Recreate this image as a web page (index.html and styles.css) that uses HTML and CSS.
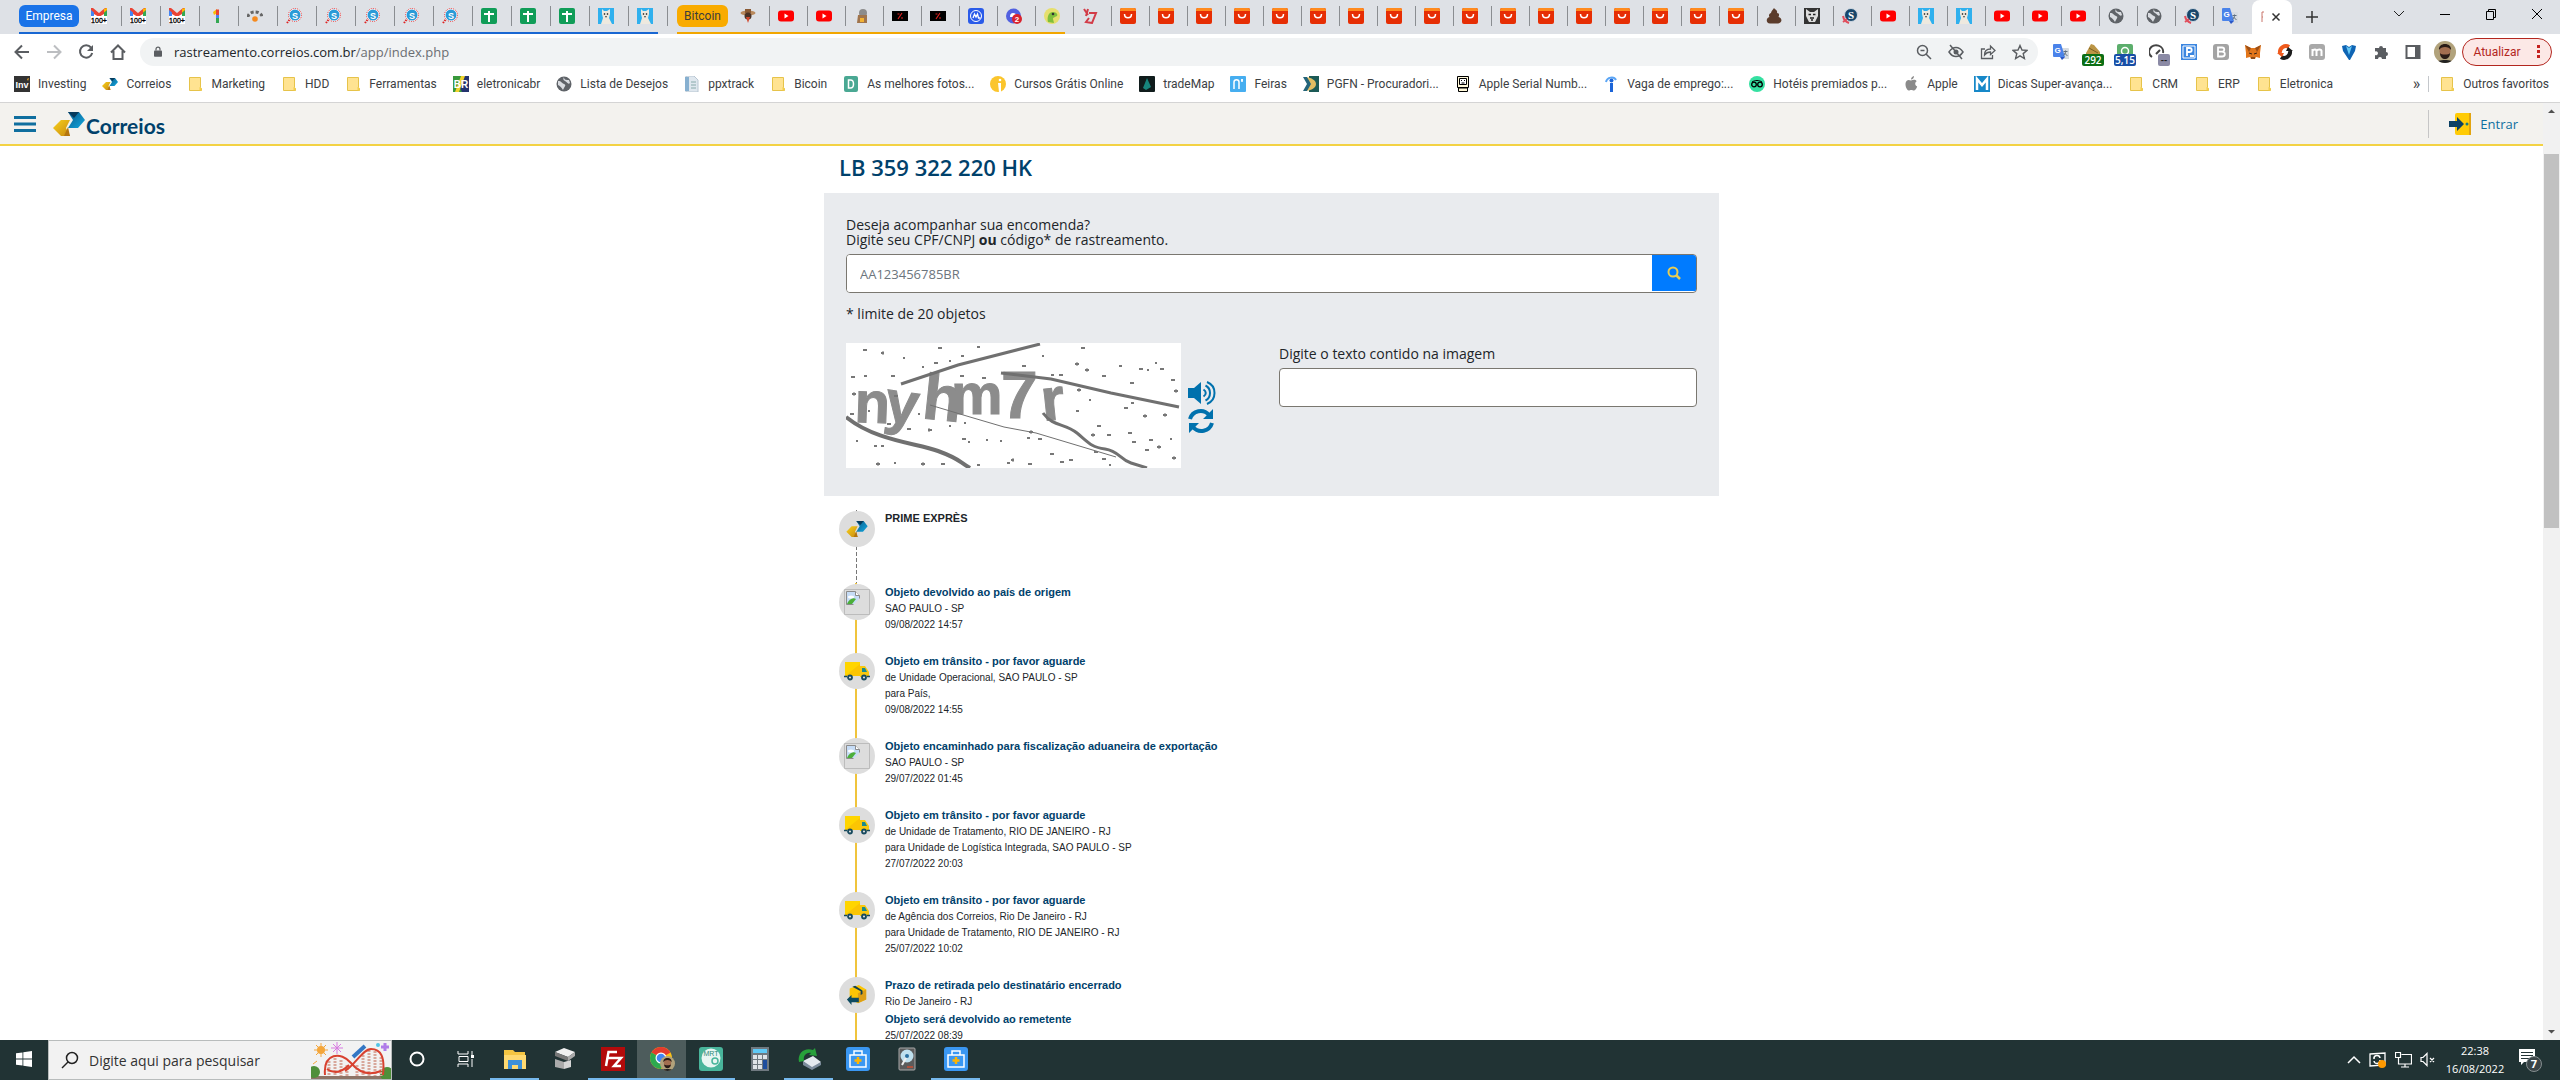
FILE: index.html
```html
<!DOCTYPE html>
<html lang="pt-BR">
<head>
<meta charset="utf-8">
<title>Rastreamento - Correios</title>
<link rel="stylesheet" href="styles.css">
</head>
<body>
<svg class="sprite" aria-hidden="true">
  <defs>
    <linearGradient id="g-gold" x1="0" y1="0" x2="1" y2="1"><stop offset="0" stop-color="#f8d21c"/><stop offset="1" stop-color="#c98a10"/></linearGradient>
    <linearGradient id="g-blue" x1="0" y1="0" x2="1" y2="1"><stop offset="0" stop-color="#0b5c8c"/><stop offset="1" stop-color="#12a8df"/></linearGradient>
    <clipPath id="round"><circle cx="11" cy="11" r="11"/></clipPath>
  </defs>
  <symbol id="gmail" viewBox="0 0 16 16"><path d="M0 0h2l6 5 6-5h2v8H0z" fill="#ea4335"/><path d="M0 2l3 2.500V8H0z" fill="#4285f4"/><path d="M13 4.500L16 2v6h-3z" fill="#34a853"/><path d="M13 1l3-1v2l-3 2.500z" fill="#fbbc04"/><path d="M3 6l5 3 5-3v3H3z" fill="#fff"/><rect y="8" width="16" height="8" fill="#fff"/><text x="8" y="15" font-family="Liberation Sans" font-size="7" text-anchor="middle" fill="#000" stroke="#000" stroke-width=".3">100+</text></symbol>
  <symbol id="one" viewBox="0 0 16 16"><path d="M5 4l4-3v4L6 7z" fill="#fbbc04"/><path d="M8 1.500h3V7H8z" fill="#ea4335"/><path d="M8 7h3v4H8z" fill="#4285f4"/><path d="M8 10h3v5H8z" fill="#34a853"/></symbol>
  <symbol id="fan" viewBox="0 0 16 16"><path d="M1 9a7 5 0 0 1 14 0" fill="none" stroke="#666" stroke-width="3" stroke-dasharray="3 2"/><circle cx="8" cy="11" r="2.800" fill="#f58a1f"/></symbol>
  <symbol id="sblue" viewBox="0 0 16 16"><circle cx="9" cy="7" r="6.500" fill="#fff" stroke="#e33" stroke-dasharray="1 1"/><path d="M1 15l3-4" stroke="#d22" stroke-width="2" stroke-dasharray="1.500 1"/><circle cx="9" cy="7" r="5.500" fill="#2b9bd7"/><text x="9" y="10.500" font-family="Liberation Sans" font-weight="bold" font-size="9" text-anchor="middle" fill="#fff">S</text></symbol>
  <symbol id="sheet" viewBox="0 0 16 16"><rect width="16" height="16" rx="2" fill="#109d58"/><path d="M3 6h10M8 3v11" stroke="#fff" stroke-width="2"/></symbol>
  <symbol id="llama" viewBox="0 0 16 16"><rect width="16" height="16" fill="#2fb0ee"/><path d="M3 16l2-6-1-4 0-5 2 2h3l3-2 0 5-1 4 3 6z" fill="#eee9df"/><circle cx="6.500" cy="6" r=".8"/><circle cx="9.500" cy="6" r=".8"/><path d="M7 8h2l-1 2z" fill="#444"/></symbol>
  <symbol id="cowboy" viewBox="0 0 16 16"><ellipse cx="8" cy="5" rx="7.500" ry="2.500" fill="#b98a5e"/><path d="M5 1h6v4H5z" fill="#8a5a34"/><circle cx="8" cy="8" r="3.500" fill="#4a3226"/><path d="M6 9h4l-2 6z" fill="#d4472c"/></symbol>
  <symbol id="yt" viewBox="0 0 16 16"><rect y="2.500" width="16" height="11" rx="3" fill="#f00"/><path d="M6.500 5.500v5l4-2.500z" fill="#fff"/></symbol>
  <symbol id="mouse" viewBox="0 0 16 16"><circle cx="9" cy="5" r="4" fill="#8c8c8c"/><path d="M4 7h9v8H3z" fill="#a0744c"/><path d="M6 10h4v4H6z" fill="#f2b233"/></symbol>
  <symbol id="pct" viewBox="0 0 16 16"><rect y="3" width="16" height="10"/><path d="M10 5l-4 6M5.500 6h2M9 10h2" stroke="#d22" stroke-width="1.200"/></symbol>
  <symbol id="cmc" viewBox="0 0 16 16"><rect width="16" height="16" rx="3" fill="#2a5be9"/><circle cx="8" cy="8" r="5.500" fill="none" stroke="#fff"/><path d="M5 10l1.500-4L8 9l1.500-3 1 4h2" fill="none" stroke="#fff" stroke-width="1.300"/></symbol>
  <symbol id="discord" viewBox="0 0 16 16"><circle cx="7.500" cy="8" r="7.500" fill="#5160e0"/><path d="M4 9c0-3 1-4 3-4s4 1 4 4z" fill="#fff"/><circle cx="11" cy="11" r="5" fill="#d9232e"/><text x="11" y="14" font-family="Liberation Sans" font-weight="bold" font-size="8" text-anchor="middle" fill="#fff">2</text></symbol>
  <symbol id="gecko" viewBox="0 0 16 16"><circle cx="8" cy="8" r="8" fill="#e6df6e"/><path d="M4 14c-1-4 0-10 5-10 4 0 5 3 4 4s-4 1-4 3l1 4z" fill="#7fbf3c"/><circle cx="9" cy="6" r="1.300" fill="#333"/></symbol>
  <symbol id="redy" viewBox="0 0 16 16"><path d="M2 1l4 6M6 1L4 8M7 5h7l-4 10-6-1 3-4" fill="none" stroke="#d23c48" stroke-width="2"/></symbol>
  <symbol id="ali" viewBox="0 0 16 16"><rect width="16" height="16" rx="2" fill="#e62e04"/><path d="M0 3V2a2 2 0 0 1 2-2h12a2 2 0 0 1 2 2v1z" fill="#ff8a1e"/><path d="M4.500 6c0 5 7 5 7 0" fill="none" stroke="#fff" stroke-width="1.500"/></symbol>
  <symbol id="poop" viewBox="0 0 16 16"><path d="M8 0c1 2 4 2 3 5 3 0 2 3 1.500 4 4 1 4 6-.5 6.500H4C-.5 15 0 10 3.500 9 2 7 4 5 5 5c0-2 2-3 3-5z" fill="#5b3c2c"/></symbol>
  <symbol id="dog" viewBox="0 0 16 16"><rect width="16" height="16" fill="#333"/><path d="M2 1l4 3h4l4-3v7l-3 6H5L2 8z" fill="#ddd"/><path d="M4.500 6.500h2.500M9 6.500h2.500M6 10h4M7 12h2" stroke="#222" stroke-width="1.300"/></symbol>
  <symbol id="snavy" viewBox="0 0 16 16"><circle cx="9" cy="7" r="6.500" fill="#17466b" stroke="#cfd8e2"/><path d="M1 8a9 9 0 0 0 6 7M1 14l4-3" stroke="#e04e5c" stroke-width="2" fill="none"/><text x="9" y="11" font-family="Liberation Serif" font-weight="bold" font-size="11" text-anchor="middle" fill="#fff">S</text></symbol>
  <symbol id="globe" viewBox="0 0 16 16"><circle cx="8" cy="8" r="7.500" fill="#5f6368"/><path d="M2 5c4 0 3 2 6 3s0 3-1 6c-2-3-3-4-5-5zM8 1c0 3 2 3 5 3l1 3c-2 2-3-1-5-2S7 3 8 1z" fill="#d9dce1"/></symbol>
  <symbol id="gtrans" viewBox="0 0 16 16"><path d="M7 4h8a1 1 0 0 1 1 1v10H9z" fill="#d6dbe1"/><path d="M1 0h7l4 13H1a1 1 0 0 1-1-1V1a1 1 0 0 1 1-1z" fill="#4a83ea"/><path d="M7 13h5l-3 3z" fill="#2a56c6"/><path d="M10.500 7.500h4M12.500 6.500v1c0 2-1 3-2 4M11.500 9l3 3" stroke="#5f6f80" fill="none"/><text x="4.500" y="9" font-family="Liberation Sans" font-weight="bold" font-size="8" text-anchor="middle" fill="#fff">G</text></symbol>
  <symbol id="folder" viewBox="0 0 16 16"><path d="M2.500 1.500h11v10l1 1v2h-12z" fill="#ffe391" stroke="#e6c34a"/><path d="M12.500 11v3.500h2V12z" fill="#f4cf4e"/></symbol>
  <symbol id="inv" viewBox="0 0 16 16"><rect width="16" height="16" fill="#333"/><text x="8" y="12" font-family="Liberation Sans" font-weight="bold" font-size="9" text-anchor="middle" fill="#fff">Inv</text><path d="M13 3l2-1-1 3z" fill="#f5a623"/></symbol>
  <symbol id="correios" viewBox="0 0 32 24"><path d="M8 8h9l-4 8 4 8H8L0 16z" fill="url(#g-gold)"/><path d="M17 24h-6l4-9z" fill="#b5760f"/><path d="M15 0h11l6 8-7 8H15l5-8z" fill="url(#g-blue)"/><path d="M15 0h11l-5 6z" fill="#073b5c"/></symbol>
  <symbol id="br" viewBox="0 0 16 16"><rect width="16" height="16" fill="#24336f"/><path d="M0 0h10L5 8l4 8H0z" fill="#38993c"/><path d="M8 0h4L6 16H2z" fill="#efd32d"/><text x="8" y="12" font-family="Liberation Sans" font-weight="bold" font-size="10" text-anchor="middle" fill="#fff">BR</text></symbol>
  <symbol id="doc" viewBox="0 0 16 16"><path d="M2 0h8l4 4v12H2z" fill="#dfe7ee" stroke="#b8c6d2"/><path d="M1 1h4v14H1z" fill="#87b0d0"/><path d="M7 6h5M7 9h5M7 12h5" stroke="#8aa"/></symbol>
  <symbol id="dgreen" viewBox="0 0 16 16"><rect x="1" width="14" height="16" rx="2" fill="#4aa893"/><path d="M5.500 4h2c4 0 4 8 0 8h-2z" fill="none" stroke="#fff" stroke-width="1.500"/></symbol>
  <symbol id="bulb" viewBox="0 0 16 16"><circle cx="8" cy="8" r="8" fill="#fbc52c"/><path d="M8 7h3v9H9z" fill="#fff"/><circle cx="10" cy="4" r="1.300" fill="#fff"/></symbol>
  <symbol id="tmap" viewBox="0 0 16 16"><rect width="16" height="16" rx="1" fill="#101c1c"/><path d="M8 2l4 9-5 3-3-2z" fill="#17857c"/></symbol>
  <symbol id="nf" viewBox="0 0 16 16"><rect width="16" height="16" rx="1" fill="#46aef0"/><path d="M4 13V6c0-3 5-3 5 0v7M11 4h2M12 3v3" fill="none" stroke="#fff" stroke-width="1.500"/></symbol>
  <symbol id="pgfn" viewBox="0 0 16 16"><rect x="6" width="10" height="16" fill="#1c5a56"/><path d="M0 1h4l6 7-6 7H0l4-7z" fill="#23647a"/><path d="M4 1c4 1 9 3 9 7s-5 6-9 7l4-7z" fill="#e2bd62"/></symbol>
  <symbol id="mac" viewBox="0 0 16 16"><path d="M2.500 .5h11v11h-11zM3.500 12h9v3.500h-9z" fill="#fff8d8" stroke="#000"/><path d="M4.500 2.500h7v6h-7z" fill="#fff" stroke="#000"/><path d="M6 4.500h1M9 4.500h1M6.500 7h3" stroke="#000"/></symbol>
  <symbol id="vaga" viewBox="0 0 16 16"><path d="M3 6c1-5 8-6 10-2" fill="none" stroke="#5aa5f5" stroke-width="2"/><circle cx="8.500" cy="4.500" r="2" fill="#1b64d8"/><path d="M7 7h3v9H7z" fill="#1b64d8"/></symbol>
  <symbol id="trip" viewBox="0 0 16 16"><circle cx="8" cy="8" r="8" fill="#34e0a1"/><circle cx="5" cy="8.500" r="2.300" fill="none" stroke="#000" stroke-width="1.300"/><circle cx="11" cy="8.500" r="2.300" fill="none" stroke="#000" stroke-width="1.300"/><path d="M3 6c3-2 7-2 10 0" stroke="#000" fill="none"/></symbol>
  <symbol id="apple" viewBox="0 0 16 16"><path d="M11 3.800c1 0 2 .5 2.700 1.400-2.200 1.300-1.800 4.400.5 5.300-.7 2-2 4-3.400 4-1 0-1.300-.6-2.500-.6s-1.600.6-2.500.6C3.700 14.500 1 8 3.500 5c1.600-1.800 3-1 4.500-.5 1-.3 2-.7 3-.7zM8 3.500C8 1.800 9.300.3 11 0c.2 1.800-1.300 3.500-3 3.500z" fill="#8a8a8a"/></symbol>
  <symbol id="mblue" viewBox="0 0 16 16"><rect width="16" height="16" fill="#1788c8"/><path d="M3 14V3l5 6 5-6v11" fill="none" stroke="#fff" stroke-width="2.500"/></symbol>
  <symbol id="truck" viewBox="0 0 26 20"><path d="M1 1h15v14H1z" fill="#ffd500"/><path d="M1 15L16 3v12z" fill="#fbc503"/><path d="M16 5h5l4 6v5h-9z" fill="#f9c80e"/><path d="M18 7h3l2 4h-5z" fill="#1b8a8c"/><path d="M0 15.500h3M23 15.500h3" stroke="#174a5e" stroke-width="1.500"/><circle cx="6" cy="16.500" r="2" fill="#ddd" stroke="#174a5e" stroke-width="1.800"/><circle cx="20" cy="16.500" r="2" fill="#ddd" stroke="#174a5e" stroke-width="1.800"/></symbol>
  <symbol id="broken" viewBox="0 0 26 26"><path d="M.5.500h25v25H.5z" fill="none" stroke="#bcbcbc"/><path d="M2.500 2.500h9l4 4v9h-13z" fill="#c6dcf6" stroke="#8b8b8b"/><path d="M11.500 2.500v4h4" fill="#fff" stroke="#8b8b8b"/><ellipse cx="7" cy="8" rx="3" ry="1.500" fill="#fff"/><path d="M3 15c2-5 6-7 9-5l-4 5z" fill="#4caf3a"/><path d="M9 16l7-7v7z" fill="#ddd"/></symbol>
  <symbol id="box" viewBox="0 0 24 24"><path d="M4 5l10-4 8 5v11l-9 4-9-5z" fill="#fcc505"/><path d="M13 10l9-4v11l-9 4z" fill="#dd9f17"/><path d="M7 3l9 5v4l2-1V7L10 2z" fill="#12404f"/><path d="M1 17l5-5v3h8v5H6v3z" fill="#0c4a60"/></symbol>
  <symbol id="kit" viewBox="0 0 24 24"><rect width="24" height="24" rx="3" fill="#3a97f2"/><path d="M4 8h16v12H4zM8 8V4h8v4" fill="none" stroke="#fff" stroke-width="1.500"/><path d="M12 10v7M8.500 13.500h7" stroke="#ffb400" stroke-width="2.500"/></symbol>
  <symbol id="face" viewBox="0 0 22 22"><g clip-path="url(#round)"><rect width="22" height="22" fill="#b1a27b"/><path d="M2 22c0-4 18-4 18 0z" fill="#222"/><ellipse cx="11" cy="10" rx="5.500" ry="7" fill="#a26e50"/><path d="M5 9C4 1 18 1 17 9c-2-4-10-4-12 0zM6 12c1 2 9 2 10 0 0 8-10 8-10 0z" fill="#2a1c17"/></g></symbol>
</svg>

<div class="window">
  <nav class="tabs" aria-label="Guias">
    <div class="group group-blue">
      <button class="chip">Empresa</button>
      <button class="tab"><svg class="fav"><use href="#gmail"/></svg></button>
      <button class="tab"><svg class="fav"><use href="#gmail"/></svg></button>
      <button class="tab"><svg class="fav"><use href="#gmail"/></svg></button>
      <button class="tab"><svg class="fav"><use href="#one"/></svg></button>
      <button class="tab"><svg class="fav"><use href="#fan"/></svg></button>
      <button class="tab"><svg class="fav"><use href="#sblue"/></svg></button>
      <button class="tab"><svg class="fav"><use href="#sblue"/></svg></button>
      <button class="tab"><svg class="fav"><use href="#sblue"/></svg></button>
      <button class="tab"><svg class="fav"><use href="#sblue"/></svg></button>
      <button class="tab"><svg class="fav"><use href="#sblue"/></svg></button>
      <button class="tab"><svg class="fav"><use href="#sheet"/></svg></button>
      <button class="tab"><svg class="fav"><use href="#sheet"/></svg></button>
      <button class="tab"><svg class="fav"><use href="#sheet"/></svg></button>
      <button class="tab"><svg class="fav"><use href="#llama"/></svg></button>
      <button class="tab"><svg class="fav"><use href="#llama"/></svg></button>
    </div>
    <div class="group group-gold">
      <button class="chip">Bitcoin</button>
      <button class="tab"><svg class="fav"><use href="#cowboy"/></svg></button>
      <button class="tab"><svg class="fav"><use href="#yt"/></svg></button>
      <button class="tab"><svg class="fav"><use href="#yt"/></svg></button>
      <button class="tab"><svg class="fav"><use href="#mouse"/></svg></button>
      <button class="tab"><svg class="fav"><use href="#pct"/></svg></button>
      <button class="tab"><svg class="fav"><use href="#pct"/></svg></button>
      <button class="tab"><svg class="fav"><use href="#cmc"/></svg></button>
      <button class="tab"><svg class="fav"><use href="#discord"/></svg></button>
      <button class="tab"><svg class="fav"><use href="#gecko"/></svg></button>
    </div>
    <div class="group">
      <button class="tab"><svg class="fav"><use href="#redy"/></svg></button>
      <button class="tab"><svg class="fav"><use href="#ali"/></svg></button>
      <button class="tab"><svg class="fav"><use href="#ali"/></svg></button>
      <button class="tab"><svg class="fav"><use href="#ali"/></svg></button>
      <button class="tab"><svg class="fav"><use href="#ali"/></svg></button>
      <button class="tab"><svg class="fav"><use href="#ali"/></svg></button>
      <button class="tab"><svg class="fav"><use href="#ali"/></svg></button>
      <button class="tab"><svg class="fav"><use href="#ali"/></svg></button>
      <button class="tab"><svg class="fav"><use href="#ali"/></svg></button>
      <button class="tab"><svg class="fav"><use href="#ali"/></svg></button>
      <button class="tab"><svg class="fav"><use href="#ali"/></svg></button>
      <button class="tab"><svg class="fav"><use href="#ali"/></svg></button>
      <button class="tab"><svg class="fav"><use href="#ali"/></svg></button>
      <button class="tab"><svg class="fav"><use href="#ali"/></svg></button>
      <button class="tab"><svg class="fav"><use href="#ali"/></svg></button>
      <button class="tab"><svg class="fav"><use href="#ali"/></svg></button>
      <button class="tab"><svg class="fav"><use href="#ali"/></svg></button>
      <button class="tab"><svg class="fav"><use href="#ali"/></svg></button>
      <button class="tab"><svg class="fav"><use href="#poop"/></svg></button>
      <button class="tab"><svg class="fav"><use href="#dog"/></svg></button>
      <button class="tab"><svg class="fav"><use href="#snavy"/></svg></button>
      <button class="tab"><svg class="fav"><use href="#yt"/></svg></button>
      <button class="tab"><svg class="fav"><use href="#llama"/></svg></button>
      <button class="tab"><svg class="fav"><use href="#llama"/></svg></button>
      <button class="tab"><svg class="fav"><use href="#yt"/></svg></button>
      <button class="tab"><svg class="fav"><use href="#yt"/></svg></button>
      <button class="tab"><svg class="fav"><use href="#yt"/></svg></button>
      <button class="tab"><svg class="fav"><use href="#globe"/></svg></button>
      <button class="tab"><svg class="fav"><use href="#globe"/></svg></button>
      <button class="tab"><svg class="fav"><use href="#snavy"/></svg></button>
      <button class="tab tab-last"><svg class="fav"><use href="#gtrans"/></svg></button>
    </div>
    <button class="tab-active" aria-label="Fechar guia"><svg width="26" height="16" viewBox="0 0 26 16"><path d="M3 3v10M3 3h2M3 8h1" stroke="#c9776d" fill="none"/><path d="M13.500 4.500l7 7m0-7l-7 7" stroke="#333" stroke-width="1.500"/></svg></button>
    <button class="new-tab" aria-label="Nova guia"><svg width="12" height="12" viewBox="0 0 12 12"><path d="M6 0v12M0 6h12" stroke="#333" stroke-width="1.500"/></svg></button>
    <div class="win-controls">
      <button aria-label="Pesquisar guias"><svg width="12" height="12" viewBox="0 0 12 12"><path d="M1 3l5 5 5-5" fill="none" stroke="#222"/></svg></button>
      <button aria-label="Minimizar"><svg width="12" height="12" viewBox="0 0 12 12"><path d="M1 6.500h10" stroke="#000"/></svg></button>
      <button aria-label="Restaurar"><svg width="12" height="12" viewBox="0 0 12 12"><path d="M1.500 3.500h7v8h-7zM3.500 3.500v-2h7v8h-2" fill="none" stroke="#000"/></svg></button>
      <button aria-label="Fechar"><svg width="12" height="12" viewBox="0 0 12 12"><path d="M1 1l10 10M11 1L1 11" stroke="#000"/></svg></button>
    </div>
  </nav>

  <div class="toolbar">
    <button class="nav-btn" aria-label="Voltar"><svg class="ic" viewBox="0 0 16 16"><path d="M15 8H2m6-6.500L1.500 8 8 14.500" fill="none" stroke="#5a5d61" stroke-width="2"/></svg></button>
    <button class="nav-btn" aria-label="Avançar"><svg class="ic" viewBox="0 0 16 16"><path d="M1 8h13M8 1.500L14.500 8 8 14.500" fill="none" stroke="#bcbec1" stroke-width="2"/></svg></button>
    <button class="nav-btn" aria-label="Recarregar"><svg class="ic" viewBox="0 0 16 16"><path d="M13 3.500A6.200 6.200 0 1 0 14.200 9" fill="none" stroke="#5a5d61" stroke-width="2"/><path d="M15 1v6H9z" fill="#5a5d61"/></svg></button>
    <button class="nav-btn" aria-label="Página inicial"><svg class="ic" viewBox="0 0 16 16"><path d="M1 8.500L8 1.500l7 7M3.500 7v8h9V7" fill="none" stroke="#5a5d61" stroke-width="2"/></svg></button>
    <div class="omnibox">
      <svg class="lock" viewBox="0 0 10 14"><path d="M1 5h8a1 1 0 0 1 1 1v6a1 1 0 0 1-1 1H1a1 1 0 0 1-1-1V6a1 1 0 0 1 1-1z" fill="#5a5d61"/><path d="M2.500 5V3.500a2.500 2.500 0 0 1 5 0V5" fill="none" stroke="#5a5d61" stroke-width="1.500"/></svg>
      <button class="url">rastreamento.correios.com.br<span class="path">/app/index.php</span></button>
      <svg class="ic" viewBox="0 0 16 16"><circle cx="6.500" cy="6.500" r="5" fill="none" stroke="#5a5d61" stroke-width="1.500"/><path d="M10 10l5 5M4.500 6.500h4" stroke="#5a5d61" stroke-width="1.500"/></svg>
      <svg class="ic" viewBox="0 0 16 16"><path d="M1 8c4-6 10-6 14 0-4 6-10 6-14 0z" fill="none" stroke="#5a5d61" stroke-width="1.500"/><circle cx="8" cy="8" r="2.500" fill="#5a5d61"/><path d="M2 1l12 14" stroke="#5a5d61" stroke-width="1.500"/></svg>
      <svg class="ic" viewBox="0 0 16 16"><path d="M5 5H1.500v9.500h11V11M4.500 11c0-4 2-6 6-6V2l4.500 4.500-4.500 4V8c-3 0-4.500 1-6 3z" fill="none" stroke="#5a5d61" stroke-width="1.300"/></svg>
      <svg class="ic" viewBox="0 0 16 16"><path d="M8 1.500l2 4.500 5 .4-3.800 3.200 1.200 4.900L8 11.900l-4.400 2.600 1.200-4.900L1 6.400 6 6z" fill="none" stroke="#5a5d61" stroke-width="1.400"/></svg>
    </div>
    <div class="extensions">
      <button aria-label="Google Tradutor"><svg class="ic" viewBox="0 0 16 16"><use href="#gtrans"/></svg></button>
      <button aria-label="Ouro"><svg class="ic" viewBox="0 0 16 16"><path d="M1 9l5-9 3 1 6 7v4H1z" fill="#bb9546"/><path d="M4 4l9 5" stroke="#7d5f22"/></svg><span class="badge badge-green">292</span></button>
      <button aria-label="Cotação"><svg class="ic" viewBox="0 0 16 16"><rect width="16" height="16" rx="2" fill="#5cae6c"/><circle cx="8" cy="7" r="3.500" fill="none" stroke="#fff" stroke-width="1.500"/></svg><span class="badge badge-blue">5,15</span></button>
      <button aria-label="Velocidade"><svg class="ic" viewBox="0 0 16 16"><path d="M3 13A7 6.500 0 1 1 14 9M7 10l4-4" fill="none" stroke="#444" stroke-width="2"/></svg><span class="badge badge-grey">--</span></button>
      <button aria-label="Página"><svg class="ic" viewBox="0 0 16 16"><rect width="16" height="16" fill="#3b86e0"/><path d="M2 2h12v12H2z" fill="none" stroke="#fff"/><path d="M6 12V4h2.500c3 0 3 4 0 4H6M9 12h4" fill="none" stroke="#fff" stroke-width="1.800"/></svg></button>
      <button aria-label="B"><svg class="ic" viewBox="0 0 16 16"><rect width="16" height="16" rx="3" fill="#a3a3a3"/><path d="M5 3.500h4c3 0 3 4.200 0 4.200 4 0 3.500 4.800 0 4.800H5zM5 7.700h4" fill="none" stroke="#fff" stroke-width="1.800"/></svg></button>
      <button aria-label="Carteira"><svg class="ic" viewBox="0 0 16 16"><path d="M0 1l6 3h4l6-3-1 8 0 5-4-1-1 2H6l-1-2-4 1V9z" fill="#e2761b"/><path d="M0 1l6 3-2 4zM16 1l-6 3 2 4z" fill="#9c4f16"/><path d="M4 9l3 1M12 9l-3 1M6 14h4" stroke="#3a2518"/></svg></button>
      <button aria-label="Sincronizar"><svg class="ic" viewBox="0 0 16 16"><path d="M12 3A6 6 0 0 0 3 9" fill="none" stroke="#ef5a1c" stroke-width="4"/><path d="M4 13A6 6 0 0 0 13 7" fill="none" stroke="#1c1c1c" stroke-width="4"/><path d="M0 9h7l-2 4z" fill="#ef5a1c"/><path d="M16 7H9l2-4z" fill="#1c1c1c"/></svg></button>
      <button aria-label="M"><svg class="ic" viewBox="0 0 16 16"><rect width="16" height="16" rx="3" fill="#a9a9a9"/><path d="M3.500 12V5M3.500 7c1-2 4-2 4 0v5M7.500 7c1-2 5-2 5 0v5" fill="none" stroke="#fff" stroke-width="2"/></svg></button>
      <button aria-label="Diamante"><svg class="ic" viewBox="0 0 16 16"><path d="M1 2l4-1 3 2 3-2 4 1-1 5-5 9H8L2 7z" fill="#0e64b4"/><path d="M5 2l3 2 3-2-3 9z" fill="#65c8f5"/></svg></button>
      <button aria-label="Extensões"><svg class="ic" viewBox="0 0 16 16"><path d="M2 4h4a2 2 0 1 1 4 0h3v4a2 2 0 1 1 0 4v3H9a2 2 0 1 0-4 0H2v-4a2 2 0 1 0 0-3.500z" fill="#5a5d61"/></svg></button>
      <button aria-label="Painel lateral"><svg class="ic" viewBox="0 0 16 16"><path d="M1.500 2h13v12h-13z" fill="none" stroke="#5a5d61" stroke-width="2"/><path d="M10 2h5v12h-5z" fill="#5a5d61"/></svg></button>
      <button aria-label="Perfil"><svg class="avatar"><use href="#face"/></svg></button>
    </div>
    <button class="update">Atualizar<svg width="4" height="14" viewBox="0 0 4 14"><path d="M0 0h3v3H0zM0 5h3v3H0zM0 10h3v3H0z" fill="#c5221f"/></svg></button>
  </div>

  <nav class="bookmarks" aria-label="Favoritos">
    <a href="#"><svg class="fav"><use href="#inv"/></svg>Investing</a>
    <a href="#"><svg class="fav"><use href="#correios"/></svg>Correios</a>
    <a href="#"><svg class="fav"><use href="#folder"/></svg>Marketing</a>
    <a href="#"><svg class="fav"><use href="#folder"/></svg>HDD</a>
    <a href="#"><svg class="fav"><use href="#folder"/></svg>Ferramentas</a>
    <a href="#"><svg class="fav"><use href="#br"/></svg>eletronicabr</a>
    <a href="#"><svg class="fav"><use href="#globe"/></svg>Lista de Desejos</a>
    <a href="#"><svg class="fav"><use href="#doc"/></svg>ppxtrack</a>
    <a href="#"><svg class="fav"><use href="#folder"/></svg>Bicoin</a>
    <a href="#"><svg class="fav"><use href="#dgreen"/></svg>As melhores fotos...</a>
    <a href="#"><svg class="fav"><use href="#bulb"/></svg>Cursos Grátis Online</a>
    <a href="#"><svg class="fav"><use href="#tmap"/></svg>tradeMap</a>
    <a href="#"><svg class="fav"><use href="#nf"/></svg>Feiras</a>
    <a href="#"><svg class="fav"><use href="#pgfn"/></svg>PGFN - Procuradori...</a>
    <a href="#"><svg class="fav"><use href="#mac"/></svg>Apple Serial Numb...</a>
    <a href="#"><svg class="fav"><use href="#vaga"/></svg>Vaga de emprego:...</a>
    <a href="#"><svg class="fav"><use href="#trip"/></svg>Hotéis premiados p...</a>
    <a href="#"><svg class="fav"><use href="#apple"/></svg>Apple</a>
    <a href="#"><svg class="fav"><use href="#mblue"/></svg>Dicas Super-avança...</a>
    <a href="#"><svg class="fav"><use href="#folder"/></svg>CRM</a>
    <a href="#"><svg class="fav"><use href="#folder"/></svg>ERP</a>
    <a href="#"><svg class="fav"><use href="#folder"/></svg>Eletronica</a>
    <button class="more" aria-label="Mais favoritos">»</button>
    <a class="others" href="#"><svg class="fav"><use href="#folder"/></svg>Outros favoritos</a>
  </nav>

  <div class="viewport">
    <div class="site">
      <header class="site-header">
        <button class="menu" aria-label="Menu"><svg width="22" height="16" viewBox="0 0 22 16"><path d="M0 1.500h22M0 8h22M0 14.500h22" stroke="#0f6f9f" stroke-width="3"/></svg></button>
        <a class="logo" href="#"><svg width="32" height="24"><use href="#correios"/></svg><span>Correios</span></a>
        <a class="login" href="#"><svg width="24" height="24" viewBox="0 0 24 24"><rect x="7" y="1" width="16" height="22" rx="2" fill="#ffcb05"/><path d="M21 1h2v22h-2z" fill="#e2a40f"/><path d="M1 9h8V5l7 7-7 7v-4H1z" fill="#0b4164"/><circle cx="19" cy="12" r="1.500" fill="#1a7a7c"/></svg>Entrar</a>
      </header>
      <main class="content">
        <h1>LB 359 322 220 HK</h1>
        <form class="search-panel">
          <label class="lead" for="objeto">Deseja acompanhar sua encomenda?<br>Digite seu CPF/CNPJ <b>ou</b> código* de rastreamento.</label>
          <div class="search-row">
            <input id="objeto" type="text" placeholder="AA123456785BR">
            <button type="button" aria-label="Buscar"><svg width="14" height="14" viewBox="0 0 14 14"><circle cx="6" cy="6" r="4.500" fill="none" stroke="#e8cd52" stroke-width="2"/><path d="M9 9l4 4" stroke="#e8cd52" stroke-width="2.500"/></svg></button>
          </div>
          <p class="limit">* limite de 20 objetos</p>
          <div class="captcha-row">
            <svg class="captcha" viewBox="0 0 335 125">
              <rect width="335" height="125" fill="#fff"/>
              <g fill="#8c8c8c" stroke="#8c8c8c" font-family="Liberation Sans" font-weight="bold">
                <text x="8" y="79" font-size="58" transform="rotate(2 8 79)">n</text>
                <text x="37" y="78" font-size="60" transform="rotate(8 37 78)">y</text>
                <text x="75" y="75" font-size="64" transform="rotate(6 75 75)">h</text>
                <text x="105" y="71" font-size="58">m</text>
                <text x="155" y="75" font-size="66">7</text>
                <text x="197" y="78" font-size="60" transform="rotate(-6 197 78)">r</text>
              </g>
              <g fill="none" stroke="#707070">
                <path d="M55 41L112 22 194 1" stroke-width="3"/>
                <path d="M155 30L205 36 265 50 333 64" stroke-width="3"/>
                <path d="M0 74C30 98 70 100 92 108S112 118 124 125" stroke-width="4"/>
                <path d="M197 70c10 14 22 10 34 20s14 14 28 16 14 10 26 14l16 5" stroke-width="3"/>
                <path d="M84 62l40 12 34 10 32 6 40 12 40 12" stroke-width="1"/>
              </g>
              <g stroke="#777" stroke-width="2" fill="none">
                <path d="M17 7h4M92 5h4M131 4h3M235 5h4M35 10h3M57 15h2M88 20h4M103 18h2M115 13h3M196 13h2M229 21h4M239 27h4M273 23h3M293 26h4M301 27h2M309 20h2M314 26h4M325 37h4M5 34h4M18 33h3M45 33h4M76 24h2M114 33h4M136 35h4M176 23h4M205 32h3M213 32h4M256 33h4M284 40h4M328 48h4M6 51h4M48 53h4M22 68h2M4 71h4M72 71h2M61 86h4M41 81h4M82 87h4M10 98h2M28 103h3M35 103h3M103 83h2M118 80h2M116 96h4M122 99h2M140 97h2M154 98h2M183 89h4M181 95h3M192 96h4M230 68h3M243 57h2M231 47h4M278 65h4M285 60h3M297 73h4M317 72h4M251 83h4M245 92h4M261 92h4M282 90h4M286 99h4M303 97h4M311 104h4M299 107h4M324 96h2M326 115h4M204 111h4M214 119h4M223 117h4M248 109h4M256 116h4M263 122h2M165 117h3M161 120h3M182 121h4M95 121h4M75 121h4M30 121h4M48 120h2M131 122h3"/>
                <path d="M37 8v4M231 19v4M241 25v4M8 49v4M83 85v4M233 45v4M299 71v4M319 70v4M330 46v4M328 113v4M313 102v4M247 90v4M185 87v4M32 119v4M77 119v4M167 115v4" stroke-width="1"/>
              </g>
            </svg>
            <div class="captcha-tools">
              <button type="button" aria-label="Ouvir"><svg width="28" height="24" viewBox="0 0 28 24"><path d="M0 7h6l7-6v22l-7-6H0z" fill="#0071ad"/><path d="M15.500 8.500c3 2 3 5 0 7M17.500 4.500c6 3 6 12 0 15M19 1c10 4 10 18 0 22" fill="none" stroke="#0071ad" stroke-width="2"/></svg></button>
              <button type="button" aria-label="Atualizar imagem"><svg width="26" height="26" viewBox="0 0 26 26"><path d="M2 11A11 11 0 0 1 21 7M24 15A11 11 0 0 1 5 19" fill="none" stroke="#0071ad" stroke-width="4"/><path d="M25 1v10H15zM1 25V15h10z" fill="#0071ad"/></svg></button>
            </div>
            <div class="captcha-field">
              <label for="captcha">Digite o texto contido na imagem</label>
              <input id="captcha" type="text">
            </div>
          </div>
        </form>
        <ul class="timeline">
          <li class="first"><div class="marker"><span class="dot"><svg width="22" height="16"><use href="#correios"/></svg></span></div><div><b>PRIME EXPRÈS</b></div></li>
          <li><div class="marker"><span class="dot"><svg width="26" height="26"><use href="#broken"/></svg></span></div><div><h2>Objeto devolvido ao país de origem</h2><p>SAO PAULO - SP</p><p>09/08/2022 14:57</p></div></li>
          <li><div class="marker"><span class="dot"><svg width="26" height="20"><use href="#truck"/></svg></span></div><div><h2>Objeto em trânsito - por favor aguarde</h2><p>de Unidade Operacional, SAO PAULO - SP</p><p>para País,</p><p>09/08/2022 14:55</p></div></li>
          <li><div class="marker"><span class="dot"><svg width="26" height="26"><use href="#broken"/></svg></span></div><div><h2>Objeto encaminhado para fiscalização aduaneira de exportação</h2><p>SAO PAULO - SP</p><p>29/07/2022 01:45</p></div></li>
          <li><div class="marker"><span class="dot"><svg width="26" height="20"><use href="#truck"/></svg></span></div><div><h2>Objeto em trânsito - por favor aguarde</h2><p>de Unidade de Tratamento, RIO DE JANEIRO - RJ</p><p>para Unidade de Logística Integrada, SAO PAULO - SP</p><p>27/07/2022 20:03</p></div></li>
          <li><div class="marker"><span class="dot"><svg width="26" height="20"><use href="#truck"/></svg></span></div><div><h2>Objeto em trânsito - por favor aguarde</h2><p>de Agência dos Correios, Rio De Janeiro - RJ</p><p>para Unidade de Tratamento, RIO DE JANEIRO - RJ</p><p>25/07/2022 10:02</p></div></li>
          <li><div class="marker"><span class="dot"><svg width="22" height="22"><use href="#box"/></svg></span></div><div><h2>Prazo de retirada pelo destinatário encerrado</h2><p>Rio De Janeiro - RJ</p><h2>Objeto será devolvido ao remetente</h2><p>25/07/2022 08:39</p></div></li>
        </ul>
      </main>
    </div>
    <div class="scrollbar" aria-hidden="true">
      <svg width="17" height="17" viewBox="0 0 17 17"><path d="M5 10h7L8.500 6.500z" fill="#505050"/></svg>
      <div class="track"><div class="thumb"></div></div>
      <svg width="17" height="17" viewBox="0 0 17 17"><path d="M5 7h7l-3.500 3.500z" fill="#505050"/></svg>
    </div>
  </div>

  <footer class="taskbar">
    <button class="start" aria-label="Iniciar"><svg width="16" height="16" viewBox="0 0 16 16"><path d="M0 2.300l6.500-.9v6.200H0zM7.300 1.300L16 0v7.600H7.300zM0 8.400h6.500v6.200L0 13.700zM7.300 8.400H16V16l-8.700-1.300z" fill="#fff"/></svg></button>
    <label class="task-search">
      <svg width="18" height="18" viewBox="0 0 18 18"><circle cx="11" cy="7" r="5.500" fill="none" stroke="#222" stroke-width="1.500"/><path d="M7 11l-6 6" stroke="#222" stroke-width="1.500"/></svg>
      <input type="text" placeholder="Digite aqui para pesquisar">
      <svg class="coaster" viewBox="0 0 80 38"><rect y="35" width="80" height="3" fill="#8d7467"/><circle cx="3" cy="31" r="6" fill="#4f8f3a"/><circle cx="76" cy="33" r="7" fill="#4f8f3a"/><circle cx="10" cy="9" r="4" fill="#f4a63a"/><path d="M10 2v14M3 9h14M5 4l10 10M15 4L5 14M6 20l-4 3" stroke="#f4a63a"/><path d="M26 1v12M20 7h12M22 3l8 8M30 3l-8 8" stroke="#d77be0"/><circle cx="67" cy="4" r="2" fill="#51c4e8"/><path d="M74 2v8M70 6h8" stroke="#b07be8" stroke-width="3"/><path d="M18 20v15M24 17v18M30 19v16M36 24v11M46 24v11M52 14v21M58 9v26M64 10v25M70 16v19" stroke="#d8a89c" stroke-width="3" stroke-dasharray="2 1"/><path d="M14 34C12 12 30 10 40 22s20 12 30 8M34 30c10-6 18-22 26-22 10 0 14 8 12 26M16 28c8 6 16 2 22-4" fill="none" stroke="#d8412f" stroke-width="2"/><path d="M42 16L54 5" stroke="#3477c4" stroke-width="4"/></svg>
    </label>
    <button aria-label="Cortana"><svg width="18" height="18" viewBox="0 0 18 18"><circle cx="9" cy="9" r="6.500" fill="none" stroke="#fff" stroke-width="2"/></svg></button>
    <button aria-label="Visão de tarefas"><svg width="18" height="18" viewBox="0 0 18 18"><path d="M1 1v3h10V1M1 17v-3h10v3M2 6.500h9v5H2zM15 1v4M15 9v8" fill="none" stroke="#fff"/><path d="M14 5h3v3h-3z" fill="#fff"/></svg></button>
    <button class="running" aria-label="Explorador"><svg width="24" height="24" viewBox="0 0 24 24"><path d="M1 3h9l2 2h10v17H1z" fill="#f5c542"/><path d="M1 8h22v14H1z" fill="#ffd970"/><path d="M5 22v-9h14v9h-4v-4H9v4z" fill="#3d8fd8"/></svg></button>
    <button aria-label="Unidade"><svg width="24" height="24" viewBox="0 0 24 24"><path d="M3 5l9-4 11 4-7 5z" fill="#f0f0f0"/><path d="M3 5l13 5v4L3 9z" fill="#777"/><path d="M16 10l7-5v4l-7 5zM3 12l9 3v7l-9-2z" fill="#aaa"/><path d="M12 15l7-2v7l-7 2z" fill="#d5d5d5"/></svg></button>
    <button class="running" aria-label="FileZilla"><svg width="24" height="24" viewBox="0 0 24 24"><rect width="24" height="24" fill="#b30b0b"/><path d="M5 19L7.500 5H16M6.500 11h6M12 11h8l-7 8h7" fill="none" stroke="#fff" stroke-width="2.500"/></svg></button>
    <button class="running current" aria-label="Chrome"><svg width="26" height="26" viewBox="0 0 26 26"><circle cx="12" cy="12" r="11" fill="#fbc116"/><path d="M12 12L2.500 6.500a11 11 0 0 1 19 0z" fill="#e33b2e"/><path d="M12 12l-9.500-5.500A11 11 0 0 0 12 23l4-8z" fill="#2da94f"/><circle cx="12" cy="12" r="5.500" fill="#fff"/><circle cx="12" cy="12" r="4.300" fill="#4285f4"/><svg x="11" y="10" width="15" height="15"><use href="#face"/></svg></svg></button>
    <button class="running" aria-label="MRT"><svg width="24" height="24" viewBox="0 0 24 24"><rect width="24" height="24" rx="3" fill="#49b59b"/><circle cx="12" cy="11" r="9.500" fill="#e8f6f2"/><text x="12" y="9" font-family="Liberation Sans" font-size="7" text-anchor="middle" fill="#2d8a76">MRT</text><circle cx="16" cy="14" r="3" fill="none" stroke="#49b59b" stroke-width="1.500"/></svg></button>
    <button aria-label="Calculadora"><svg width="24" height="24" viewBox="0 0 24 24"><rect x="3" width="18" height="24" fill="#6f7980"/><path d="M5 2h14v4H5z" fill="#5fc9f5"/><path d="M5 8h4v4H5zM10 8h4v4h-4zM15 8h4v4h-4zM5 13h4v4H5zM10 13h4v4h-4zM5 18h4v4H5zM10 18h4v4h-4z" fill="#dfe4e8"/><path d="M15 13h4v9h-4z" fill="#1e4e9e"/></svg></button>
    <button class="running" aria-label="Backup"><svg width="24" height="24" viewBox="0 0 24 24"><path d="M6 14l10-5 8 6-9 7z" fill="#e4e9ee"/><path d="M6 14v4l9 5v-3zM15 20l9-5v3l-9 5z" fill="#7c8c9c"/><path d="M2 15C0 6 8 0 16 3l2-2 2 8-8-1 2-2C9 5 6 9 7 14z" fill="#27a03a"/></svg></button>
    <button aria-label="Kit"><svg width="24" height="24"><use href="#kit"/></svg></button>
    <button aria-label="Disco"><svg width="24" height="24" viewBox="0 0 24 24"><rect x="4" y="1" width="16" height="22" rx="1" fill="#5b5b5b" stroke="#aaa"/><circle cx="12" cy="9" r="6.500" fill="#bfe0ee"/><path d="M12 9l-5 9" stroke="#eee" stroke-width="2"/><circle cx="12" cy="9" r="2" fill="#2a6fa0"/><path d="M12 19h6v2h-6z" fill="#b0513c"/></svg></button>
    <button class="running" aria-label="Kit"><svg width="24" height="24"><use href="#kit"/></svg></button>
    <div class="tray">
      <svg width="14" height="16" viewBox="0 0 14 16"><path d="M1 11l6-6 6 6" fill="none" stroke="#fff" stroke-width="1.500"/></svg>
      <svg width="18" height="16" viewBox="0 0 18 16"><path d="M1 2l15-1v12L1 14z" fill="none" stroke="#fff" stroke-width="1.300"/><path d="M5 7a3 3 0 0 1 6-1M11 8a3 3 0 0 1-6 1" fill="none" stroke="#fff" stroke-width="1.500"/><circle cx="13" cy="12" r="4" fill="#f90"/></svg>
      <svg width="17" height="16" viewBox="0 0 17 16"><path d="M3.500 6v6h13V2.500h-10M10 12v3M6 15h8M.5.500h5v5h-5z" fill="none" stroke="#fff" stroke-width="1.200"/></svg>
      <svg width="16" height="16" viewBox="0 0 16 16"><path d="M1 5.500h2l4-4v12l-4-4H1zM10 6l4 4m0-4l-4 4" fill="none" stroke="#fff" stroke-width="1.200"/></svg>
      <time class="clock">22:38<br>16/08/2022</time>
      <button class="notify" aria-label="Notificações"><svg width="26" height="24" viewBox="0 0 26 24"><path d="M1 1h16v13H6l-3 3v-3H1z" fill="#fff"/><path d="M3 4.500h12M3 7.500h12M3 10.500h12" stroke="#233336"/><circle cx="16" cy="16" r="7.500" fill="#3a4447" stroke="#848d8f"/><text x="16" y="20" font-family="Open Sans" font-weight="bold" font-size="11" text-anchor="middle" fill="#fff">7</text></svg></button>
    </div>
  </footer>
</div>
</body>
</html>
```
FILE: styles.css
```css
* { box-sizing: border-box; }
body { margin: 0; background: #fff; font-family: "Open Sans", sans-serif; color: #212529; }
button { font: inherit; color: inherit; padding: 0; border: 0; background: none; display: flex; align-items: center; justify-content: center; }
a { color: inherit; text-decoration: none; }
svg { display: block; flex: none; }
.sprite { position: absolute; width: 0; height: 0; }
.fav, .ic { width: 16px; height: 16px; }

.window { height: 100vh; display: flex; flex-direction: column; overflow: hidden; }

/* Tab strip */
.tabs { flex: none; height: 34px; display: flex; background: #dee1e6; padding-left: 19px; }
.group { display: flex; align-items: center; border-bottom: 2px solid transparent; flex: none; }
.group-blue { border-image: linear-gradient(to right, #1967d2 637px, transparent 637px) 2; }
.group-gold { border-image: linear-gradient(to right, #f2a600 386px, transparent 386px) 2; margin-left: 9px; }
.chip { height: 22px; width: 60px; border-radius: 6px; background: #1a73e8; color: #fff; font: 12px Roboto, sans-serif; margin-right: 4px; }
.group-gold .chip { width: 51px; background: #f9ab00; color: #3c3c3c; }
.tab { width: 38px; height: 20px; justify-content: flex-start; padding-left: 8px; border-right: 1px solid #8a8d91; }
.group-blue .tab { width: 39px; }
.tab-last { border-right-color: transparent; }
.tab-active { width: 40px; background: #fff; border-radius: 8px 8px 0 0; }
.new-tab { width: 40px; }
.win-controls { margin-left: auto; display: flex; height: 28px; }
.win-controls button { width: 46px; }

/* Toolbar */
.toolbar { flex: none; height: 36px; display: flex; align-items: center; padding: 0 8px 0 6px; }
.nav-btn { width: 32px; }
.omnibox { flex: 1; height: 28px; margin-left: 6px; margin-right: 12px; padding: 0 10px 0 14px; display: flex; align-items: center; gap: 16px; border-radius: 14px; background: #f1f3f4; }
.lock { width: 8px; height: 14px; margin-right: -4px; }
.url { flex: 1; justify-content: flex-start; font-size: 13px; }
.path { color: #6b6e72; }
.extensions { display: flex; gap: 10px; margin-right: 6px; }
.extensions button { width: 22px; height: 28px; position: relative; }
.avatar { width: 22px; height: 22px; }
.badge { position: absolute; bottom: 0; left: 0; width: 22px; border-radius: 2px; color: #fff; font-size: 10px; line-height: 12px; font-weight: 600; text-align: center; }
.badge-green { background: #0b6e14; }
.badge-blue { background: #174ea6; }
.badge-grey { background: #8b8aa5; color: #222; left: 12px; width: 12px; }
.update { height: 28px; width: 90px; gap: 16px; border: 1px solid #b3261e; border-radius: 14px; background: #fce8e6; color: #b3261e; font: 12px Roboto, sans-serif; }

/* Bookmarks */
.bookmarks { flex: none; height: 33px; display: flex; align-items: center; gap: 16px; padding: 0 11px 5px 14px; border-bottom: 1px solid #d4d4d4; font: 12px Roboto, sans-serif; color: #3c4043; white-space: nowrap; }
.bookmarks a { display: flex; align-items: center; gap: 8px; }
.more { margin-left: auto; font-size: 16px; }
.bookmarks .others { margin-left: -8px; border-left: 1px solid #c4c7cb; padding-left: 10px; }

/* Page */
.viewport { flex: 1; min-height: 0; display: flex; }
.site { flex: 1; min-width: 0; overflow: hidden; }
.scrollbar { width: 17px; display: flex; flex-direction: column; background: #f1f1f1; }
.track { flex: 1; padding: 34px 1px 0; }
.thumb { height: 43%; background: #c1c1c1; }

.site-header { height: 43px; display: flex; align-items: center; padding: 0 25px 0 14px; background: #f3f2ee; border-bottom: 2px solid #f3d243; }
.logo { display: flex; align-items: flex-end; gap: 1px; margin-left: 17px; color: #00416b; font: 21px/20px "Lato", sans-serif; font-weight: 700; }
.login { margin-left: auto; height: 28px; display: flex; align-items: center; gap: 8px; padding-left: 19px; border-left: 1px solid #c6c6c6; color: #0f6f9f; font-size: 13px; }

.content { width: 100%; max-width: 895px; margin: 0 auto; }
.content h1 { margin: 0; height: 47px; padding: 7px 15px 0; font-size: 22px; line-height: 28px; font-weight: 600; color: #00416b; }
.search-panel { height: 303px; padding: 24px 22px; background: #e9ebee; font-size: 14px; }
.lead { display: block; line-height: 15px; margin-bottom: 7px; }
.search-row { display: flex; height: 39px; border: 1px solid #7a7770; border-radius: 4px; background: #fff; overflow: hidden; }
.search-row input { flex: 1; min-width: 0; border: 0; padding: 0 13px; font: inherit; font-size: 13px; outline: 0; }
.search-row input::placeholder { color: #6c757d; }
.search-row button { width: 44px; height: 36px; background: #007bff; }
.limit { margin: 12px 0 20px; line-height: 18px; }
.captcha-row { display: grid; grid-template-columns: 335px 84px 1fr; column-gap: 7px; }
.captcha { width: 335px; height: 125px; }
.captcha-tools { display: flex; flex-direction: column; gap: 3px; padding-top: 38px; }
.captcha-tools button { justify-content: flex-start; }
.captcha-field label { display: block; line-height: 18px; margin: 2px 0 5px; }
.captcha-field input { display: block; width: 100%; height: 39px; border: 1px solid #7a7770; border-radius: 4px; background: #fff; font: inherit; padding: 0 13px; }

.timeline { list-style: none; margin: 14px 0 0; padding: 0 0 0 15px; font: 10px/16px "Liberation Sans", Arial, sans-serif; }
.timeline li { display: flex; gap: 10px; }
.timeline li > div:last-child { padding-bottom: 19px; }
.marker { width: 36px; background: linear-gradient(#f0c43c, #f0c43c) 16px 0 / 2px 100% no-repeat; }
.dot { width: 36px; height: 36px; margin-top: 1px; border-radius: 50%; background: #ddd; display: flex; align-items: center; justify-content: center; }
.timeline .first { height: 73px; font-size: 11px; }
.first .marker { background: repeating-linear-gradient(#777 0 4px, #fff 4px 6px) 17px 0 / 1px 100% no-repeat; }
.timeline h2 { margin: 0; font-size: 11px; line-height: 18px; color: #00416b; }
.timeline p { margin: 0; }

/* Taskbar */
.taskbar { flex: none; height: 40px; display: flex; background: #213334; }
.taskbar > button { width: 49px; border-bottom: 2px solid transparent; }
.taskbar > .start { width: 48px; }
.taskbar > .running { border-bottom-color: #76b9ed; }
.taskbar > .current { background: #4d5c5c; }
.task-search { width: 344px; display: flex; align-items: center; gap: 10px; padding-left: 12px; background: #f2f2f2; border: 1px solid #b8bcbc; }
.task-search input { flex: 1; min-width: 0; border: 0; background: none; font: 14px "Open Sans", sans-serif; padding: 0; outline: 0; }
.task-search input::placeholder { color: #333; }
.coaster { width: 80px; height: 38px; }
.tray { margin-left: auto; display: flex; align-items: center; gap: 8px; padding-right: 16px; color: #fff; }
.clock { width: 62px; text-align: center; font-size: 11px; line-height: 18px; }
.notify { margin-left: 4px; }
```
